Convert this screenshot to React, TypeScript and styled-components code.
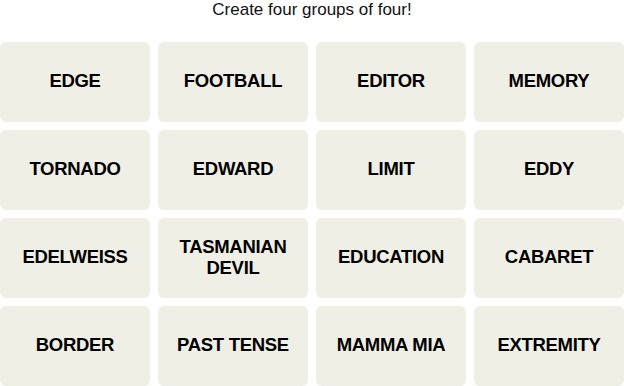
import styled, { createGlobalStyle } from "styled-components";

const words: string[] = [
  "EDGE",
  "FOOTBALL",
  "EDITOR",
  "MEMORY",
  "TORNADO",
  "EDWARD",
  "LIMIT",
  "EDDY",
  "EDELWEISS",
  "TASMANIAN DEVIL",
  "EDUCATION",
  "CABARET",
  "BORDER",
  "PAST TENSE",
  "MAMMA MIA",
  "EXTREMITY",
];

const GlobalStyle = createGlobalStyle`
  body {
    margin: 0;
    background: #ffffff;
    font-family: "Liberation Sans", Arial, sans-serif;
    color: #121212;
  }
`;

const Page = styled.div`
  width: 624px;
`;

const Prompt = styled.div`
  font-size: 17px;
  line-height: 20px;
  text-align: center;
  margin-bottom: 22px;
`;

const Board = styled.div`
  display: grid;
  grid-template-columns: repeat(4, 150px);
  grid-auto-rows: 80px;
  gap: 8px;
`;

const Tile = styled.button`
  display: flex;
  align-items: center;
  justify-content: center;
  padding: 0 12px 3px;
  border: none;
  border-radius: 6px;
  background-color: #efefe6;
  color: #000000;
  font-family: "Liberation Sans", Arial, sans-serif;
  font-weight: 700;
  font-size: 18.5px;
  line-height: 21px;
  text-align: center;
  letter-spacing: -0.3px;
  cursor: pointer;
`;

function App() {
  return (
    <Page>
      <GlobalStyle />
      <Prompt>Create four groups of four!</Prompt>
      <Board>
        {words.map((word) => (
          <Tile key={word}>{word}</Tile>
        ))}
      </Board>
    </Page>
  );
}

export default App;
